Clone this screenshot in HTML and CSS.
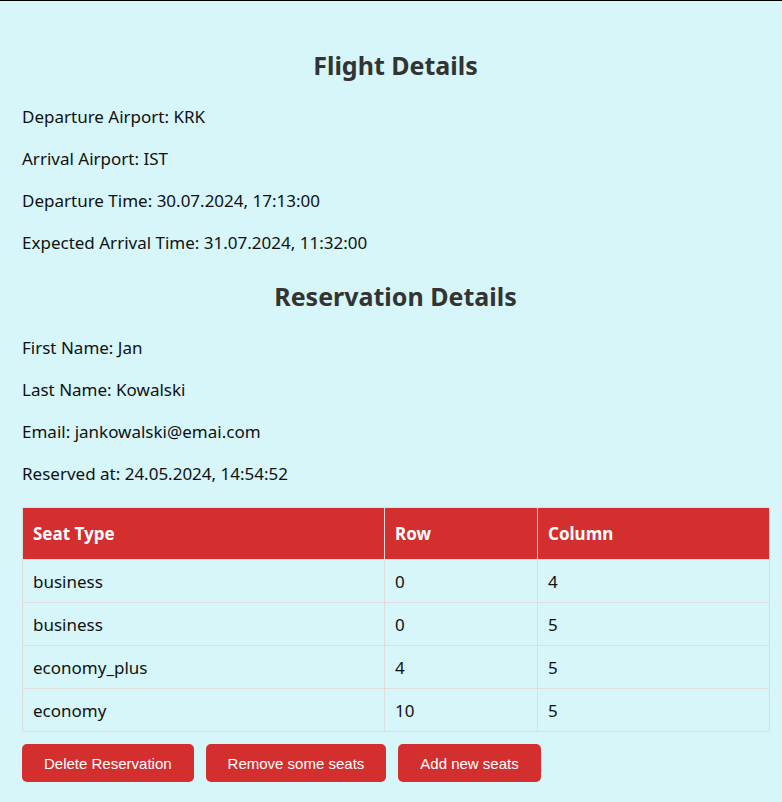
FILE: index.html
```html
<!DOCTYPE html>
<html>
<head>
<meta charset="utf-8">
<link rel="stylesheet" href="styles.css">
</head>
<body>
<div class="page">
  <h2 class="title">Flight Details</h2>
  <p class="line">Departure Airport: KRK</p>
  <p class="line">Arrival Airport: IST</p>
  <p class="line">Departure Time: 30.07.2024, 17:13:00</p>
  <p class="line">Expected Arrival Time: 31.07.2024, 11:32:00</p>
  <h2 class="title">Reservation Details</h2>
  <p class="line">First Name: Jan</p>
  <p class="line">Last Name: Kowalski</p>
  <p class="line">Email: jankowalski@emai.com</p>
  <p class="line">Reserved at: 24.05.2024, 14:54:52</p>
  <table class="seats">
    <colgroup>
      <col class="c1">
      <col class="c2">
      <col class="c3">
    </colgroup>
    <thead>
      <tr><th>Seat Type</th><th>Row</th><th>Column</th></tr>
    </thead>
    <tbody>
      <tr><td>business</td><td>0</td><td>4</td></tr>
      <tr><td>business</td><td>0</td><td>5</td></tr>
      <tr><td>economy_plus</td><td>4</td><td>5</td></tr>
      <tr><td>economy</td><td>10</td><td>5</td></tr>
    </tbody>
  </table>
  <div class="actions">
    <button class="btn">Delete Reservation</button>
    <button class="btn">Remove some seats</button>
    <button class="btn">Add new seats</button>
  </div>
</div>
</body>
</html>
```
FILE: styles.css
```css
html, body {
  margin: 0;
  padding: 0;
  background: #d6f6f9;
}
body {
  border-top: 1px solid #000;
  font-family: "Noto Sans", "Open Sans", sans-serif;
  font-size: 17px;
  color: #111;
}
.page {
  padding: 24px 13px 0 22px;
}
.title {
  margin: 24px 0 23px;
  font-size: 25px;
  line-height: 32px;
  font-weight: 700;
  text-align: center;
  color: #333;
}
.line {
  margin: 16px 0;
  line-height: 26px;
}
.seats {
  margin-top: 20px;
  width: 747px;
  border-collapse: collapse;
  table-layout: fixed;
}
.c1 { width: 362px; }
.c2 { width: 153px; }
.c3 { width: 232px; }
.seats th, .seats td {
  border: 1px solid #ddd;
  text-align: left;
  padding: 0 10px;
}
.seats th {
  background: #d32f2f;
  color: #fff;
  font-weight: 700;
  height: 51px;
}
.seats td {
  height: 42px;
}
.actions {
  display: flex;
  gap: 12px;
  margin-top: 12px;
}
.btn {
  font-family: "Liberation Sans", Arial, sans-serif;
  font-size: 15px;
  background: #d32f2f;
  color: #fff;
  border: none;
  border-radius: 5px;
  height: 38px;
  padding: 0 22px;
  margin: 0;
}
```
